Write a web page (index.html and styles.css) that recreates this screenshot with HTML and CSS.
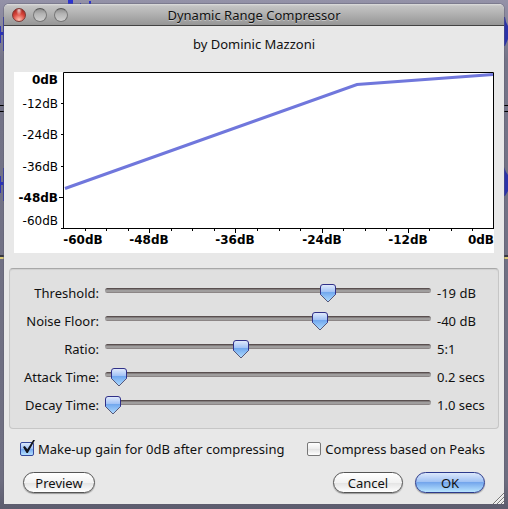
FILE: index.html
```html
<!DOCTYPE html>
<html lang="en">
  <head>
    <meta charset="UTF-8" />
    <meta name="viewport" content="width=device-width, initial-scale=1.0" />
    <title>Dynamic Range Compressor</title>
    <link rel="stylesheet" href="styles.css">
  </head>
  <body>
    <!-- tracks showing behind the window -->
    <svg class="wave wave-left" width="100" height="509" viewBox="0 0 100 509" aria-hidden="true">
      <path d="M0 105.500H4M0 111.500H4M0 256H4" stroke="#000" />
      <path d="M0 258H4" stroke="#d8c878" stroke-width="2" />
      <path d="M0 26h1v17H0zM1 32h2v3H1zM3 17h1v34H3zM0 176h1v17H0zM1 182h2v3H1zM3 168h1v33H3z" fill="#2c33b4" />
      <path d="M68 0h5v4h-5zM80 3h1v1h-1zM89 1h2v3h-2z" fill="#2c33d0" />
    </svg>
    <svg class="wave wave-right" width="4" height="509" viewBox="0 0 4 509" aria-hidden="true">
      <path d="M0 105.500H4M0 111.500H4M0 256H4" stroke="#000" />
      <path d="M0 258H4" stroke="#d8c878" stroke-width="2" />
      <path d="M0 17h1l1 5 2 4v13l-3 7H0zM0 167l2 5 2 3v16l-3 5H0z" fill="#2c33a8" />
    </svg>

    <main class="window">
      <header class="titlebar">
        <div class="lights">
          <button class="light close" aria-label="Close"></button>
          <button class="light" aria-label="Minimize"></button>
          <button class="light" aria-label="Zoom"></button>
        </div>
        <h1>Dynamic Range Compressor</h1>
      </header>

      <p class="author">by Dominic Mazzoni</p>

      <svg class="graph" viewBox="0 0 480 181" role="img" aria-label="Compression curve">
        <rect width="480" height="181" fill="#fff" />
        <path d="M51 116.500L343 12.500L479 2.500" fill="none" stroke="#7077dc" stroke-width="3" />
        <path class="axis" d="M49.500 156V.5H479.500V156M47 156.500H480M47 31.500h3M47 62.500h3M47 94.500h3M45 125.500h5" />
        <path class="axis" d="M71.500 156v3M92.500 156v3M114.500 156v3M135.500 156v5M157.500 156v3M178.500 156v3M200.500 156v3M221.500 156v5M243.500 156v3M265.500 156v3M286.500 156v3M308.500 156v5M329.500 156v3M351.500 156v3M372.500 156v3M394.500 156v5M415.500 156v3M437.500 156v3M458.500 156v3" />
        <g class="scale" text-anchor="end">
          <text class="major" x="44" y="12">0dB</text>
          <text x="44" y="36">-12dB</text>
          <text x="44" y="67">-24dB</text>
          <text x="44" y="99">-36dB</text>
          <text class="major" x="44" y="130">-48dB</text>
          <text x="44" y="153">-60dB</text>
        </g>
        <g class="scale" text-anchor="middle">
          <text class="major" x="69" y="172">-60dB</text>
          <text class="major" x="135" y="172">-48dB</text>
          <text class="major" x="221" y="172">-36dB</text>
          <text class="major" x="308" y="172">-24dB</text>
          <text class="major" x="394" y="172">-12dB</text>
          <text class="major" x="480" y="172" text-anchor="end">0dB</text>
        </g>
      </svg>

      <section class="group">
        <label for="threshold">Threshold:</label>
        <input type="range" id="threshold" min="-60" max="-1" value="-19">
        <output for="threshold">-19 dB</output>

        <label for="floor">Noise Floor:</label>
        <input type="range" id="floor" min="-80" max="-20" value="-40">
        <output for="floor">-40 dB</output>

        <label for="ratio">Ratio:</label>
        <input type="range" id="ratio" min="1.5" max="10" step="0.5" value="5">
        <output for="ratio">5:1</output>

        <label for="attack">Attack Time:</label>
        <input type="range" id="attack" min="0.1" max="5" step="0.1" value="0.2">
        <output for="attack">0.2 secs</output>

        <label for="decay">Decay Time:</label>
        <input type="range" id="decay" min="1" max="30" value="1">
        <output for="decay">1.0 secs</output>
      </section>

      <div class="options">
        <label><input type="checkbox" checked>Make-up gain for 0dB after compressing</label>
        <label><input type="checkbox">Compress based on Peaks</label>
      </div>

      <footer class="buttons">
        <button class="push preview">Preview</button>
        <button class="push">Cancel</button>
        <button class="push default">OK</button>
      </footer>

      <svg class="grip" width="12" height="12" viewBox="0 0 12 12" aria-hidden="true">
        <path d="M1 12L12 1M5 12L12 5M9 12L12 9" stroke="#777" />
        <path d="M2 12L12 2M6 12L12 6M10 12L12 10" stroke="#fff" stroke-opacity=".6" />
      </svg>
    </main>
  </body>
</html>
```
FILE: styles.css
```css
* {
  box-sizing: border-box;
}
body {
  position: relative;
  margin: 0;
  padding: 4px 4px 5px;
  background: linear-gradient(#9492a8, #747488 60px, #6d6d80 480px, #5c5c6e);
  font-family: "Noto Sans", sans-serif;
  font-size: 13px;
  line-height: 16px;
  color: #111;
}
.wave {
  position: absolute;
  top: 0;
}
.wave-left {
  left: 0;
}
.wave-right {
  right: 0;
}
.window {
  position: relative;
  background: #e8e8e8;
  border-radius: 5px 5px 0 0;
  box-shadow: 0 0 0 1px #5d5d6c66;
}
.titlebar {
  display: grid;
  grid-template-columns: 70px 1fr 70px;
  align-items: center;
  height: 22px;
  border-bottom: 1px solid #434343;
  border-radius: 5px 5px 0 0;
  background: linear-gradient(#dedede, #c4c4c4 2px, #969696);
}
.titlebar h1 {
  margin: 0;
  font-size: 13px;
  font-weight: normal;
  text-align: center;
  text-shadow: 0 1px 0 #c8c8c8;
}
.lights {
  display: flex;
  gap: 7px;
  padding-left: 8px;
}
.light {
  width: 14px;
  height: 14px;
  padding: 0;
  border: 1px solid #777;
  border-top-color: #555;
  border-radius: 50%;
  background: linear-gradient(#8e8e8e, #b4b4b4 40%, #d0d0d0);
}
.light.close {
  border-color: #7c3a35;
  background:
    radial-gradient(ellipse at 50% 10%, #ffffffcc, #fff0 35%),
    radial-gradient(circle at 50% 90%, #ffc0b0, #d9473d 50%, #8f1814);
}
.author {
  margin: 0;
  padding: 10px 0 20px;
  text-align: center;
}
.graph {
  display: block;
  width: calc(100% - 20px);
  margin: 0 10px;
}
.axis {
  fill: none;
  stroke: #000;
}
.scale {
  font-family: "DejaVu Sans", sans-serif;
  font-size: 12px;
}
.major {
  font-weight: bold;
}
.group {
  display: grid;
  grid-template-columns: 84px 1fr 57px;
  grid-auto-rows: 28px;
  align-items: center;
  column-gap: 6px;
  margin: 15px 5px 0;
  padding: 10px 4px 9px 5px;
  border: 1px solid #c6c6c6;
  border-top-color: #a8a8a8;
  border-radius: 4px;
  background: #e0e0e0;
  box-shadow: inset 0 1px 1px #d0d0d0;
}
.group label {
  text-align: right;
  white-space: nowrap;
}
input[type="range"] {
  appearance: none;
  width: 100%;
  height: 20px;
  margin: 0 0 6px;
  background: none;
}
input[type="range"]::-webkit-slider-runnable-track {
  height: 5px;
  border-radius: 3px;
  background: linear-gradient(#594f4f 1px, #837d7d 1px 2px, #a09e9e 2px 4px, #8c8686 4px);
}
input[type="range"]::-webkit-slider-thumb {
  appearance: none;
  width: 16px;
  height: 19px;
  margin-top: -4px;
  background: url("data:image/svg+xml,%3Csvg xmlns='http://www.w3.org/2000/svg' viewBox='0 0 16 19'%3E%3ClinearGradient id='g' x2='0' y2='1'%3E%3Cstop stop-color='%23e4ecfc'/%3E%3Cstop offset='.4' stop-color='%23a4c4f6'/%3E%3Cstop offset='.45' stop-color='%2372a8ee'/%3E%3Cstop offset='1' stop-color='%23b0dcff'/%3E%3C/linearGradient%3E%3Cpath d='M3 .5H13Q15.500 .5 15.500 3V10.500L8 18L.5 10.500V3Q.5 .5 3 .5Z' fill='url(%23g)' stroke='%23303088'/%3E%3Cpath d='M1 11L8 18L15 11' fill='none' stroke='%23585878'/%3E%3C/svg%3E");
}
.options {
  display: flex;
  justify-content: space-between;
  margin: 12px 19px 0 16px;
}
.options label {
  display: flex;
  align-items: center;
  gap: 4px;
  white-space: nowrap;
}
input[type="checkbox"] {
  appearance: none;
  width: 14px;
  height: 14px;
  margin: 0;
  border: 1px solid #777;
  border-radius: 2px;
  background: linear-gradient(#fff, #ececec 50%, #e2e2e2 50%, #fff);
}
input[type="checkbox"]:checked {
  position: relative;
  border-color: #35489c;
  background: linear-gradient(#dbe8fc, #9cc0f6 50%, #74a8ee 50%, #b4e0ff);
}
input[type="checkbox"]:checked::after {
  content: "";
  position: absolute;
  left: 2px;
  top: -3px;
  width: 12px;
  height: 13px;
  background: #14141c;
  clip-path: polygon(0 53%, 15% 46%, 36% 72%, 85% 0, 100% 0, 40% 100%, 30% 100%);
}
.buttons {
  display: flex;
  gap: 12px;
  padding: 15px 19px 11px;
}
.push {
  width: 70px;
  height: 21px;
  padding: 0;
  border: 1px solid #555;
  border-radius: 11px;
  background: linear-gradient(#fff, #f2f2f2 50%, #e2e2e2 50%, #fff);
  box-shadow: 0 1px 1px #999;
  font: inherit;
  color: inherit;
}
.push.preview {
  width: 72px;
  margin-right: auto;
}
.push.default {
  border-color: #2c3a8c;
  background: linear-gradient(#dce8fb, #9dc0f4 48%, #74a6ec 50%, #b8e4ff);
}
.grip {
  position: absolute;
  right: 0;
  bottom: 0;
}
```
